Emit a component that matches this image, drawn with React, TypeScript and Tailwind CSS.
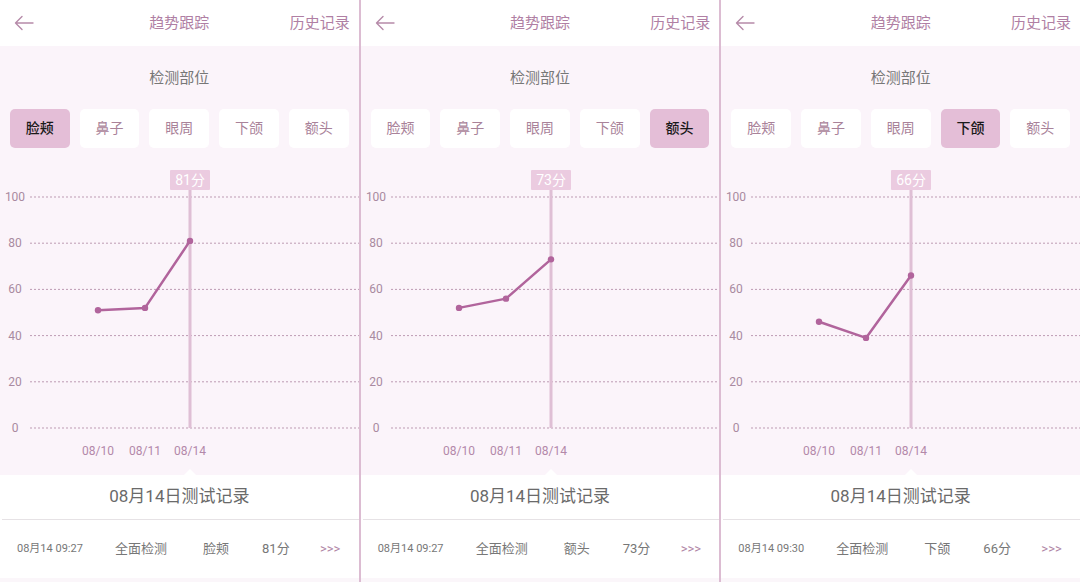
import React from "react";

const TABS = ["脸颊", "鼻子", "眼周", "下颌", "额头"];

interface PanelData {
  active: string;
  values: number[];
  time: string;
}

const PANELS: PanelData[] = [
  { active: "脸颊", values: [51, 52, 81], time: "08月14 09:27" },
  { active: "额头", values: [52, 56, 73], time: "08月14 09:27" },
  { active: "下颌", values: [46, 39, 66], time: "08月14 09:30" },
];

const DATES = ["08/10", "08/11", "08/14"];
const XS = [98, 145, 190];

// svg top = 160 in page coords, 0 line at 428
const yOf = (v: number) => 268 - v * 2.31;

function Chart({ values }: { values: number[] }) {
  const last = values[values.length - 1];
  const pts = values.map((v, i) => `${XS[i]},${yOf(v)}`).join(" ");
  return (
    <svg width="359" height="305" className="block" style={{ fontFamily: "Roboto, 'Noto Sans CJK SC', sans-serif" }}>
      {[100, 80, 60, 40, 20, 0].map((v) => (
        <g key={v}>
          <text x="15" y={yOf(v) + 4} textAnchor="middle" fontSize="12" fill="#a98aa0">
            {v}
          </text>
          <line x1="30" x2="359" y1={yOf(v)} y2={yOf(v)} stroke="#bd9bb3" strokeWidth="1" strokeDasharray="2 2" />
        </g>
      ))}
      {/* cursor line */}
      <line x1="190" x2="190" y1="28" y2={yOf(0)} stroke="#dfbfd5" strokeWidth="3" />
      <rect x="170" y="10" width="40" height="20" rx="1" fill="#ebcbe0" />
      <text x="190" y="25" textAnchor="middle" fontSize="14" fill="#ffffff">
        {last}分
      </text>
      <polyline points={pts} fill="none" stroke="#b1649c" strokeWidth="2.5" strokeLinejoin="round" />
      {values.map((v, i) => (
        <circle key={i} cx={XS[i]} cy={yOf(v)} r="3.2" fill="#b1649c" />
      ))}
      {DATES.map((d, i) => (
        <text key={d} x={XS[i]} y="295" textAnchor="middle" fontSize="12" fill="#b388a9">
          {d}
        </text>
      ))}
    </svg>
  );
}

function Panel({ data }: { data: PanelData }) {
  const last = data.values[data.values.length - 1];
  return (
    <div className="flex-1 flex flex-col bg-white overflow-hidden">
      {/* header */}
      <div className="h-[46px] flex items-center justify-between px-[13px] relative">
        <svg width="22" height="16" viewBox="0 0 22 16" className="mt-[-1px]">
          <path d="M20 8H2.5M9 1.5L2.5 8L9 14.5" fill="none" stroke="#b68aa9" strokeWidth="1.4" strokeLinecap="round" strokeLinejoin="round" />
        </svg>
        <span className="absolute left-1/2 -translate-x-1/2 text-[15px] text-[#b07fa4]">趋势跟踪</span>
        <span className="text-[15px] text-[#b07fa4] mr-[-4px]">历史记录</span>
      </div>

      {/* pink area */}
      <div className="bg-[#fbf4fa] h-[429px] flex flex-col relative">
        <div className="text-center text-[15px] text-[#777] mt-[21px] leading-[22px]">检测部位</div>
        <div className="flex gap-[10px] px-[10px] mt-[20px]">
          {TABS.map((t) => (
            <div
              key={t}
              className={
                t === data.active
                  ? "w-[60px] h-[39px] rounded-[5px] bg-[#e4bed7] flex items-center justify-center text-[14px] text-[#1a1a1a] font-medium"
                  : "w-[60px] h-[39px] rounded-[5px] bg-white flex items-center justify-center text-[14px] text-[#a98299]"
              }
            >
              {t}
            </div>
          ))}
        </div>
        <div className="mt-[12px]">
          <Chart values={data.values} />
        </div>
        {/* pointer triangle */}
        <div className="absolute left-[184px] bottom-0 w-0 h-0 border-l-[6px] border-r-[6px] border-b-[6px] border-l-transparent border-r-transparent border-b-white" />
      </div>

      {/* record */}
      <div className="flex-1 flex flex-col">
        <div className="h-[44px] flex items-center justify-center text-[17px] text-[#6a6a6a]">08月14日测试记录</div>
        <div className="h-px bg-[#e6e2e5] ml-[2px]" />
        <div className="h-[58px] flex items-center pl-[17px] text-[13px] text-[#777]">
          <span className="w-[98px] text-[11px]">{data.time}</span>
          <span className="w-[88px]">全面检测</span>
          <span className="w-[59px]">{data.active}</span>
          <span className="w-[58px]">{last}分</span>
          <span className="text-[13px] text-[#b085a5]">&gt;&gt;&gt;</span>
        </div>
        <div className="flex-1 bg-[#fbf6fa]" />
      </div>
    </div>
  );
}

export default function App() {
  return (
    <div
      className="w-[1080px] h-[582px] flex bg-white overflow-hidden"
      style={{ fontFamily: "Roboto, 'Noto Sans CJK SC', sans-serif" }}
    >
      <Panel data={PANELS[0]} />
      <div className="w-[2px] bg-[#dcbcd2]" />
      <Panel data={PANELS[1]} />
      <div className="w-[2px] bg-[#dcbcd2]" />
      <Panel data={PANELS[2]} />
    </div>
  );
}
